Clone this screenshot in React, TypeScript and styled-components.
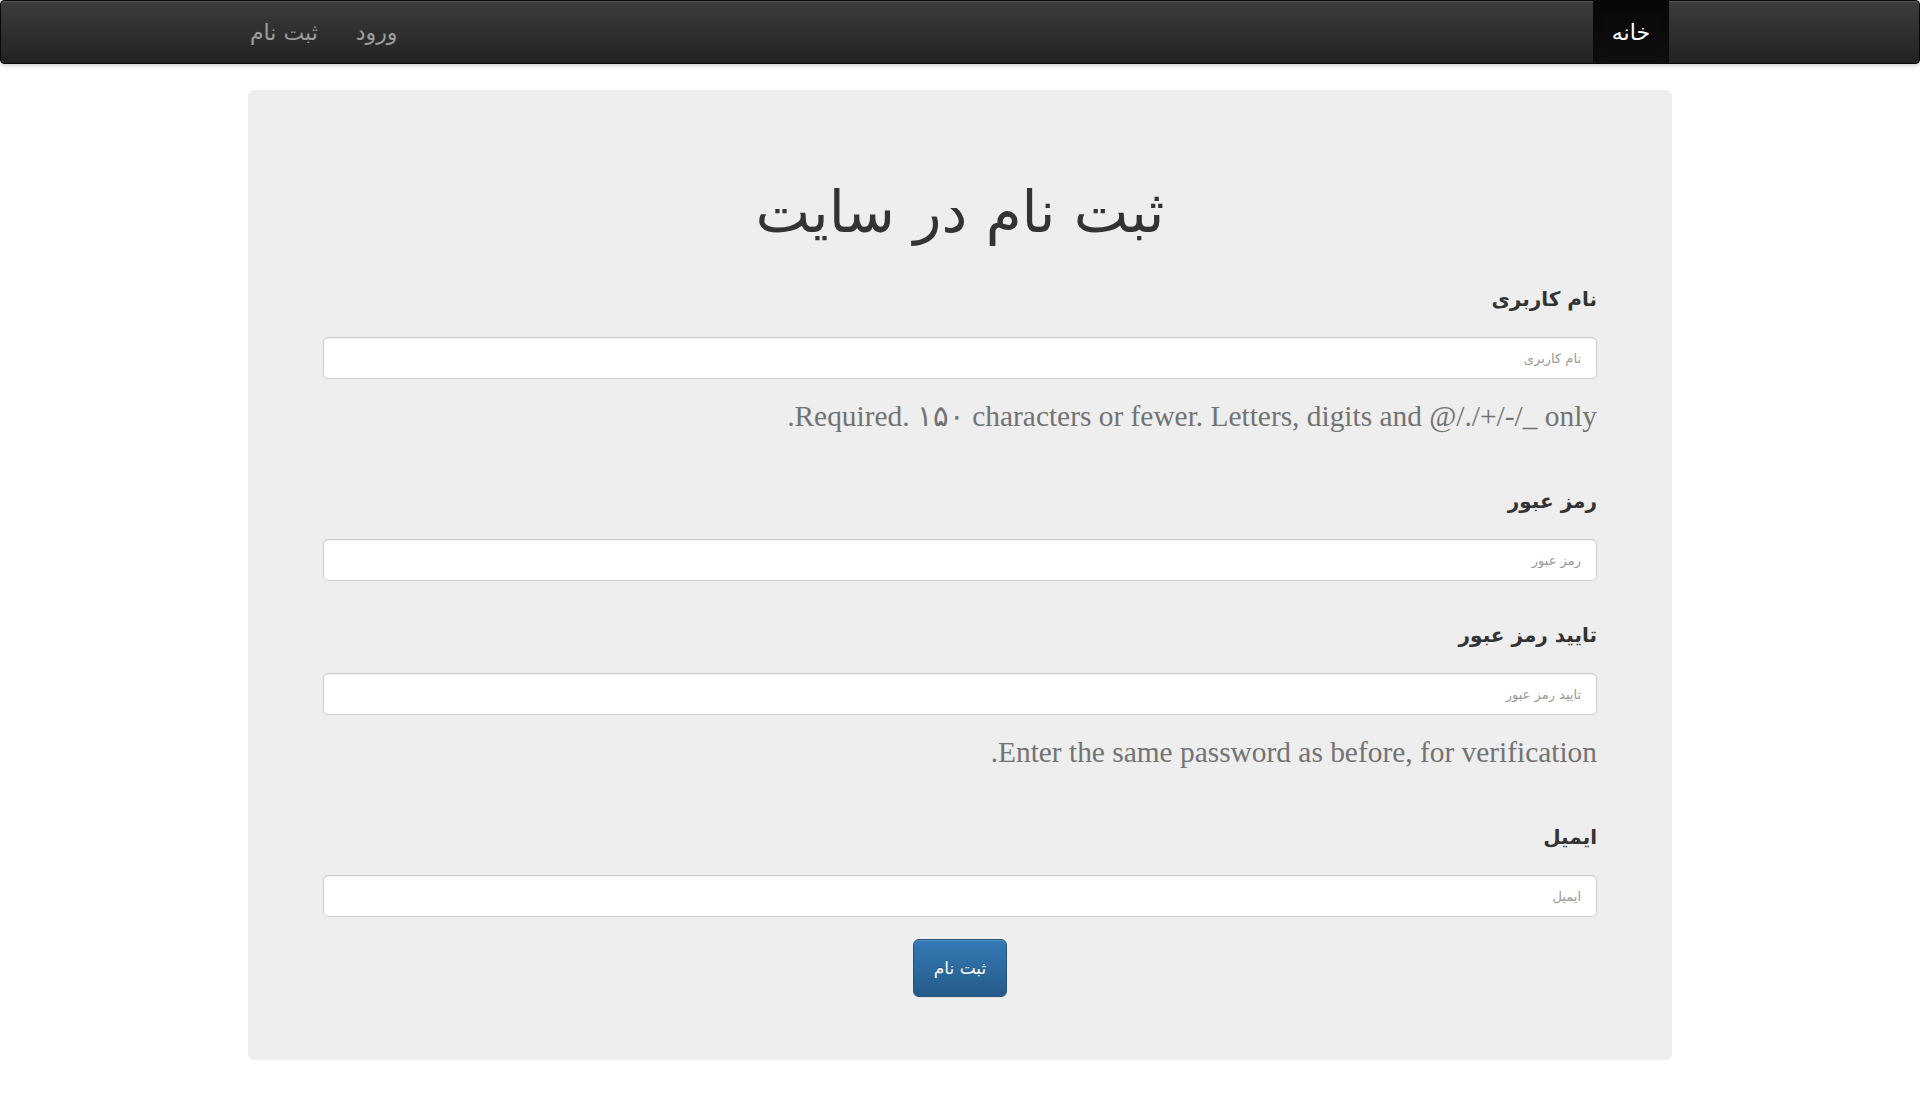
import React from "react";
import styled, { createGlobalStyle } from "styled-components";

const GlobalStyle = createGlobalStyle`
  html, body {
    margin: 0;
    padding: 0;
    background: #ffffff;
  }
  body {
    font-family: "DejaVu Sans", "Noto Sans", sans-serif;
    color: #333333;
  }
  * { box-sizing: border-box; }
`;

const Navbar = styled.nav`
  height: 64px;
  background-image: linear-gradient(to bottom, #3c3c3c 0%, #222222 100%);
  border: 1px solid #080808;
  border-radius: 4px;
  box-shadow: inset 0 1px 0 rgba(255, 255, 255, 0.15), 0 1px 5px rgba(0, 0, 0, 0.25);
`;

const NavContainer = styled.div`
  width: 1424px;
  height: 100%;
  margin: 0 auto;
  display: flex;
  flex-direction: row;
  justify-content: space-between;
  align-items: stretch;
  direction: rtl;
`;

const NavList = styled.ul<{ $side: "start" | "end" }>`
  list-style: none;
  margin: 0;
  padding: 0;
  display: flex;
  align-items: stretch;
  ${(p) => (p.$side === "start" ? "margin-right: 3px;" : "margin-left: -17px;")}
`;

const NavItem = styled.li<{ $active?: boolean }>`
  display: flex;
  align-items: center;
  padding: 0 19px;
  font-size: 22px;
  color: ${(p) => (p.$active ? "#ffffff" : "#9d9d9d")};
  background: ${(p) =>
    p.$active ? "linear-gradient(to bottom, #080808 0%, #0f0f0f 100%)" : "transparent"};
  box-shadow: ${(p) => (p.$active ? "inset 0 3px 9px rgba(0,0,0,0.25)" : "none")};
`;

const Page = styled.main`
  padding-top: 26px;
`;

const Jumbotron = styled.section`
  width: 1424px;
  margin: 0 auto;
  background: #eeeeee;
  border-radius: 6px;
  padding: 82px 75px 63px;
  direction: rtl;
`;

const Title = styled.h1`
  margin: 0 0 33px;
  text-align: center;
  font-size: 58px;
  line-height: 80px;
  font-weight: normal;
  color: #333333;
`;

const Fields = styled.div`
  display: flex;
  flex-direction: column;
  gap: 40px;
`;

const FormGroup = styled.div`
  display: flex;
  flex-direction: column;
`;

const Label = styled.label`
  display: block;
  font-size: 20px;
  line-height: 28px;
  font-weight: bold;
  color: #333333;
  margin-bottom: 24px;
  text-align: right;
`;

const Input = styled.input`
  display: block;
  width: 100%;
  height: 42px;
  padding: 6px 15px;
  font-family: "DejaVu Sans", sans-serif;
  font-size: 13px;
  color: #555555;
  background: #ffffff;
  border: 1px solid #cccccc;
  border-radius: 5px;
  box-shadow: inset 0 1px 1px rgba(0, 0, 0, 0.075);
  direction: rtl;
  outline: none;
  &::placeholder {
    color: #999999;
  }
`;

const Help = styled.p`
  margin: 22px 0 16px;
  font-family: "Liberation Serif", "DejaVu Serif", serif;
  font-size: 29.4px;
  line-height: 30px;
  color: #737373;
  text-align: right;
  direction: rtl;
`;

const ButtonRow = styled.div`
  display: flex;
  justify-content: center;
  margin-top: 22px;
`;

const SubmitButton = styled.button`
  width: 94px;
  height: 58px;
  font-family: "DejaVu Sans", sans-serif;
  font-size: 17px;
  color: #ffffff;
  background-image: linear-gradient(to bottom, #337ab7 0%, #265a88 100%);
  border: 1px solid #245580;
  border-radius: 6px;
  box-shadow: inset 0 1px 0 rgba(255, 255, 255, 0.15), 0 1px 1px rgba(0, 0, 0, 0.075);
  text-shadow: 0 -1px 0 rgba(0, 0, 0, 0.2);
  cursor: pointer;
`;

const fields = [
  {
    label: "نام کاربری",
    type: "text",
    help: "Required. ۱۵۰ characters or fewer. Letters, digits and @/./+/-/_ only.",
  },
  { label: "رمز عبور", type: "password" },
  {
    label: "تایید رمز عبور",
    type: "password",
    help: "Enter the same password as before, for verification.",
  },
  { label: "ایمیل", type: "email" },
];

export default function App() {
  return (
    <>
      <GlobalStyle />
      <Navbar>
        <NavContainer>
          <NavList $side="start">
            <NavItem $active>خانه</NavItem>
          </NavList>
          <NavList $side="end">
            <NavItem>ورود</NavItem>
            <NavItem>ثبت نام</NavItem>
          </NavList>
        </NavContainer>
      </Navbar>
      <Page>
        <Jumbotron>
          <Title>ثبت نام در سایت</Title>
          <form onSubmit={(e) => e.preventDefault()}>
            <Fields>
              {fields.map((f) => (
                <FormGroup key={f.label}>
                  <Label>{f.label}</Label>
                  <Input type={f.type} placeholder={f.label} />
                  {f.help && <Help>{f.help}</Help>}
                </FormGroup>
              ))}
            </Fields>
            <ButtonRow>
              <SubmitButton type="submit">ثبت نام</SubmitButton>
            </ButtonRow>
          </form>
        </Jumbotron>
      </Page>
    </>
  );
}
